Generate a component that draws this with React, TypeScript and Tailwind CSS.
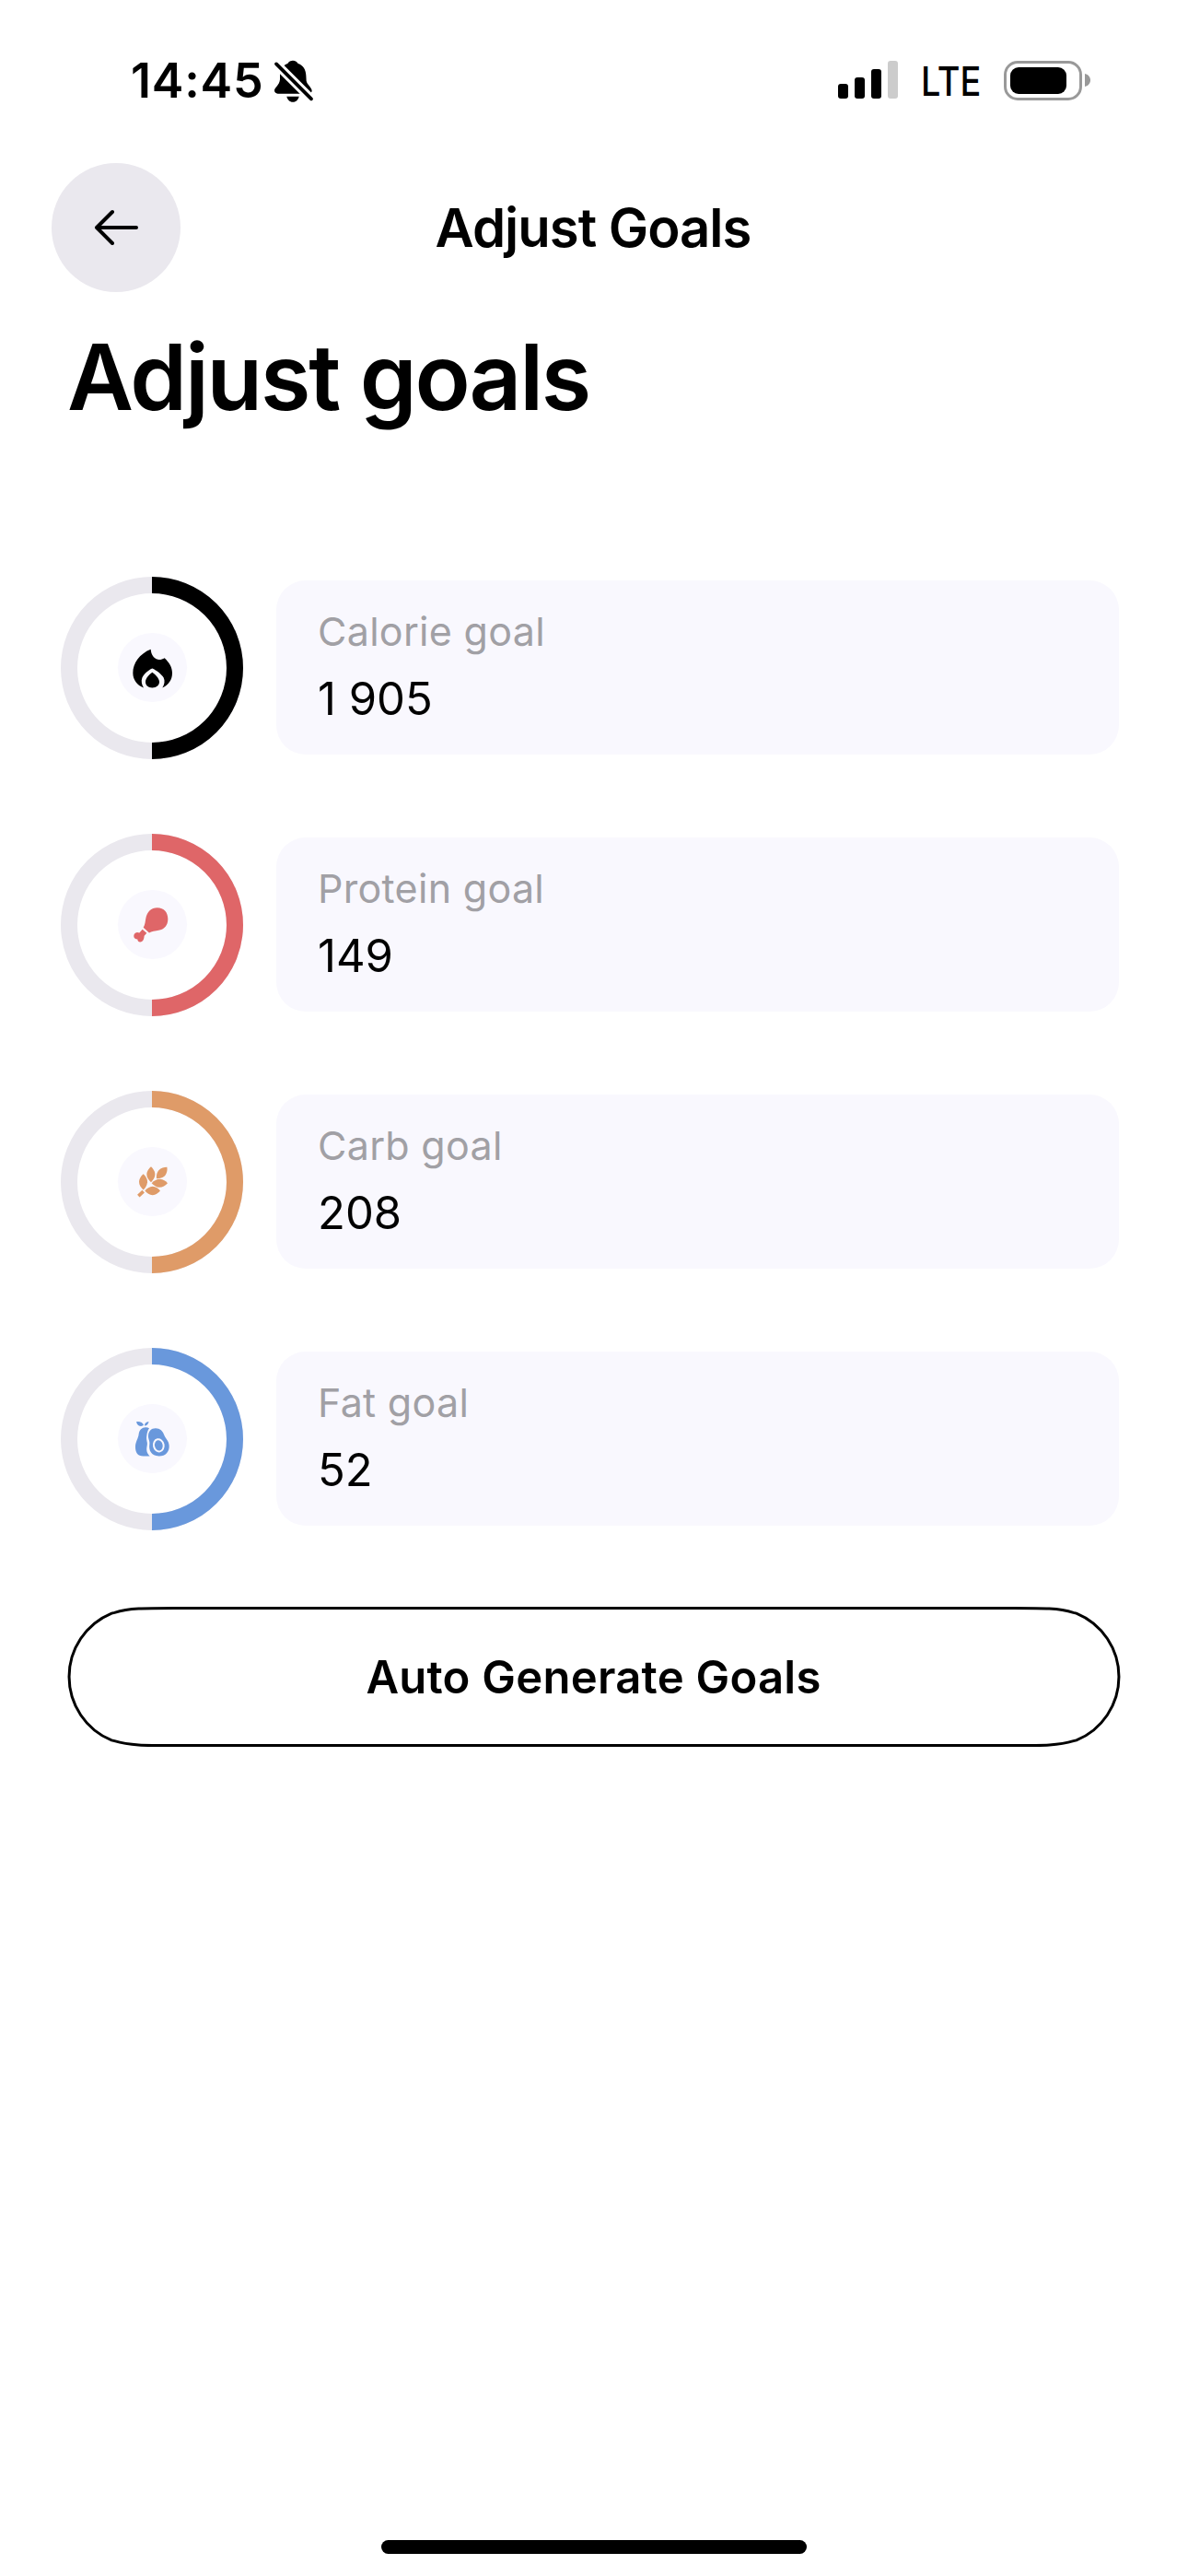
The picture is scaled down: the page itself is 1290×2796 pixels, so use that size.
import type { ReactNode } from "react";

type Goal = {
  label: string;
  value: string;
  color: string;
  viewBox: string;
  icon: ReactNode;
};

const goals: Goal[] = [
  {
    label: "Calorie goal",
    value: "1 905",
    color: "#000000",
    viewBox: "0 -1.5 330 330",
    icon: (
      <g fill="currentColor">
        <path d="M161 103C162 118 170 133 184 136C192 138 199 135 206 131C221 145 231 161 231 180C231 202 219 219 199 228C206 218 208 205 203 195C196 184 180 171 166 165C152 171 137 185 133 196C129 207 132 219 138 228C117 220 103 202 103 180C103 149 124 118 161 103Z" />
        <path d="M166 178C176 185 188 197 189 208C190 219 180 228 166 228C152 228 143 219 144 208C145 197 156 185 166 178Z" />
      </g>
    ),
  },
  {
    label: "Protein goal",
    value: "149",
    color: "#df6668",
    viewBox: "0 -4.5 330 330",
    icon: (
      <g fill="currentColor">
        <path d="M182 104C205 104 217 120 217 141C217 162 205 174 190 177C175 180 163 181 156 186L137 169C143 158 143 150 145 139C149 117 163 104 182 104Z" />
        <path d="M134 175L148 187L140 196C139 207 136 215 127 216C120 216 118 211 118 207C110 207 105 202 106 195C107 186 116 182 124 186Z" />
      </g>
    ),
  },
  {
    label: "Carb goal",
    value: "208",
    color: "#df9b68",
    viewBox: "0 -7.5 330 330",
    icon: (
      <g fill="currentColor">
        <path d="M162 107C170 115 176 124 175 135C174 145 168 151 162 158C154 151 148 143 148 133C148 123 154 114 162 107Z" />
        <path d="M214 109C216 120 213 131 206 138C199 144 188 147 180 146C179 137 180 127 187 119C195 111 204 109 214 109Z" />
        <path d="M137 131C145 139 151 147 150 158C149 168 143 177 137 183C129 176 123 168 123 157C123 147 129 138 137 131Z" />
        <path d="M164 161C172 153 181 148 191 148C202 149 210 154 216 161C209 169 200 175 189 175C179 174 171 168 164 161Z" />
        <path d="M142 186C149 178 157 173 167 172C178 173 186 179 192 186C185 194 177 200 167 200C157 200 149 194 142 186Z" />
        <path d="M121 203L137 188" stroke="currentColor" strokeWidth="11" />
      </g>
    ),
  },
  {
    label: "Fat goal",
    value: "52",
    color: "#6998dc",
    viewBox: "0 -10.5 330 330",
    icon: (
      <g fill="currentColor">
        <path d="M146 116C133 115 124 124 122 138C121 152 111 162 111 180C111 198 118 210 137 210H158C148 200 146 190 149 176C152 164 145 158 148 143C149 133 151 126 156 119C153 117 150 116 146 116Z" />
        <path d="M177 119C162 119 154 129 153 143C152 154 159 160 157 172C154 190 162 210 188 210C210 210 222 195 221 176C220 160 210 154 205 142C201 128 191 119 177 119Z" />
        <ellipse cx="187" cy="175" rx="16" ry="20" transform="rotate(-12 187 175)" fill="none" stroke="#f9f8fe" strokeWidth="6" />
        <path d="M114 98C124 96 136 100 138 109C132 115 118 114 114 98Z" />
        <path d="M155 98C146 98 140 104 141 111C148 111 152 106 155 98Z" />
      </g>
    ),
  },
];

function BellOff() {
  return (
    <svg className="h-[46px] w-[42px]" viewBox="534 44 126 138">
      <path d="M594 46C602 46 608 50 611 56C628 62 636 76 637 94L638 112C640 124 656 134 656 144C656 151 651 154 645 154H545C538 154 534 149 534 144C534 134 550 128 552 108V88C553 74 562 62 577 56C581 49 587 46 594 46Z" />
      <path d="M574 163H614C612 173 605 181 594 181C583 181 576 173 574 163Z" />
      <path d="M525 42L669 186" stroke="#fff" strokeWidth="29" />
      <path d="M540 57L654 171" stroke="#000" strokeWidth="11" strokeLinecap="round" />
    </svg>
  );
}

function StatusBar() {
  return (
    <div className="flex h-[176px] items-center pr-[106px] pl-[142px]">
      <span className="w-[143px] text-[52px] leading-none font-semibold tracking-[0.8px]">14:45</span>
      <div className="ml-[13px]">
        <BellOff />
      </div>
      <div className="mb-[3px] ml-auto flex h-[41px] items-end gap-[7px]">
        <div className="h-4 w-[11px] rounded-[3px] bg-black" />
        <div className="h-[23px] w-[11px] rounded-[3px] bg-black" />
        <div className="h-8 w-[11px] rounded-[3px] bg-black" />
        <div className="h-[41px] w-[11px] rounded-[3px] bg-[#cccccc]" />
      </div>
      <div className="ml-[25px] w-[63px]">
        <span className="inline-block origin-left scale-x-[0.86] text-[44px] leading-none font-medium">LTE</span>
      </div>
      <div className="mb-[2px] ml-[27px] flex h-[43px] w-[85px] rounded-[15px] border-[3px] border-[#999999] p-[4px]">
        <div className="w-[61px] rounded-[9px] bg-black" />
      </div>
      <svg className="mb-[2px] ml-[3px] h-[14px] w-[6px]" viewBox="0 0 6 14">
        <path d="M0 0C4 1 6 4 6 7C6 10 4 13 0 14Z" fill="#999" />
      </svg>
    </div>
  );
}

function GoalRow({ goal }: { goal: Goal }) {
  return (
    <div className="flex h-[197px] items-center gap-9">
      <div className="grid size-[198px] place-items-center *:col-start-1 *:row-start-1" style={{ color: goal.color }}>
        <svg className="size-[198px]" viewBox="0 0 198 198" fill="none" strokeWidth="18">
          <circle cx="99" cy="99" r="90" stroke="#eae8ee" />
          <path d="M99 9A90 90 0 0 1 99 189" stroke="currentColor" />
        </svg>
        <div className="size-[75px] rounded-full bg-[#f9f8fe]" />
        <svg className="size-[110px]" viewBox={goal.viewBox}>
          {goal.icon}
        </svg>
      </div>
      <div className="h-[189px] w-[915px] rounded-[32px] bg-[#f9f8fe] pt-[18px] pl-[45px]">
        <div className="text-[43px] leading-[74px] tracking-[0.3px] text-[#a1a0a5]">{goal.label}</div>
        <div className="text-[49px] leading-[73px]">{goal.value}</div>
      </div>
    </div>
  );
}

export default function App() {
  return (
    <div className="flex h-[2796px] w-[1290px] flex-col bg-white font-['Inter',sans-serif] text-black">
      <StatusBar />
      <header className="grid h-[142px] grid-cols-[140px_1fr_140px] items-center px-[55px]">
        <button className="ml-px flex size-[140px] items-center justify-center rounded-full bg-[#eae8ee]" aria-label="Back">
          <svg className="h-10 w-12" viewBox="0 0 48 40" fill="none" stroke="#000" strokeWidth="4" strokeLinecap="round" strokeLinejoin="round">
            <path d="M46 20H3M20 3L3 20L20 37" />
          </svg>
        </button>
        <div className="pr-[2px] text-center text-[58px] leading-none font-semibold tracking-[-1px]">Adjust Goals</div>
      </header>
      <h1 className="mt-[31px] ml-[73px] text-[99px] leading-[120px] font-semibold tracking-[-2.2px]">Adjust goals</h1>
      <main className="mt-[157px] flex flex-col gap-[82px] pl-[66px]">
        {goals.map((goal) => (
          <GoalRow key={goal.label} goal={goal} />
        ))}
      </main>
      <button className="relative mt-[84px] ml-[74px] flex h-[152px] w-[1142px] items-center justify-center">
        <svg className="absolute inset-0 size-full overflow-visible" viewBox="0 0 1142 152" fill="none" stroke="#000" strokeWidth="3">
          <path d="M115.4 1.5H1026.6C1059.4 1.5 1075.8 1.5 1091.6 6.4L1094.8 7.1A74.5 74.5 0 0 1 1094.8 144.9L1091.6 145.6C1075.8 150.5 1059.4 150.5 1026.6 150.5H115.4C82.6 150.5 66.2 150.5 50.4 145.6L47.2 144.9A74.5 74.5 0 0 1 47.2 7.1L50.4 6.4C66.2 1.5 82.6 1.5 115.4 1.5Z" />
        </svg>
        <span className="pt-px pr-px text-[49px] leading-none font-semibold tracking-[0.25px]">Auto Generate Goals</span>
      </button>
      <div className="mx-auto mt-auto mb-6 h-[15px] w-[462px] rounded-full bg-black" />
    </div>
  );
}
